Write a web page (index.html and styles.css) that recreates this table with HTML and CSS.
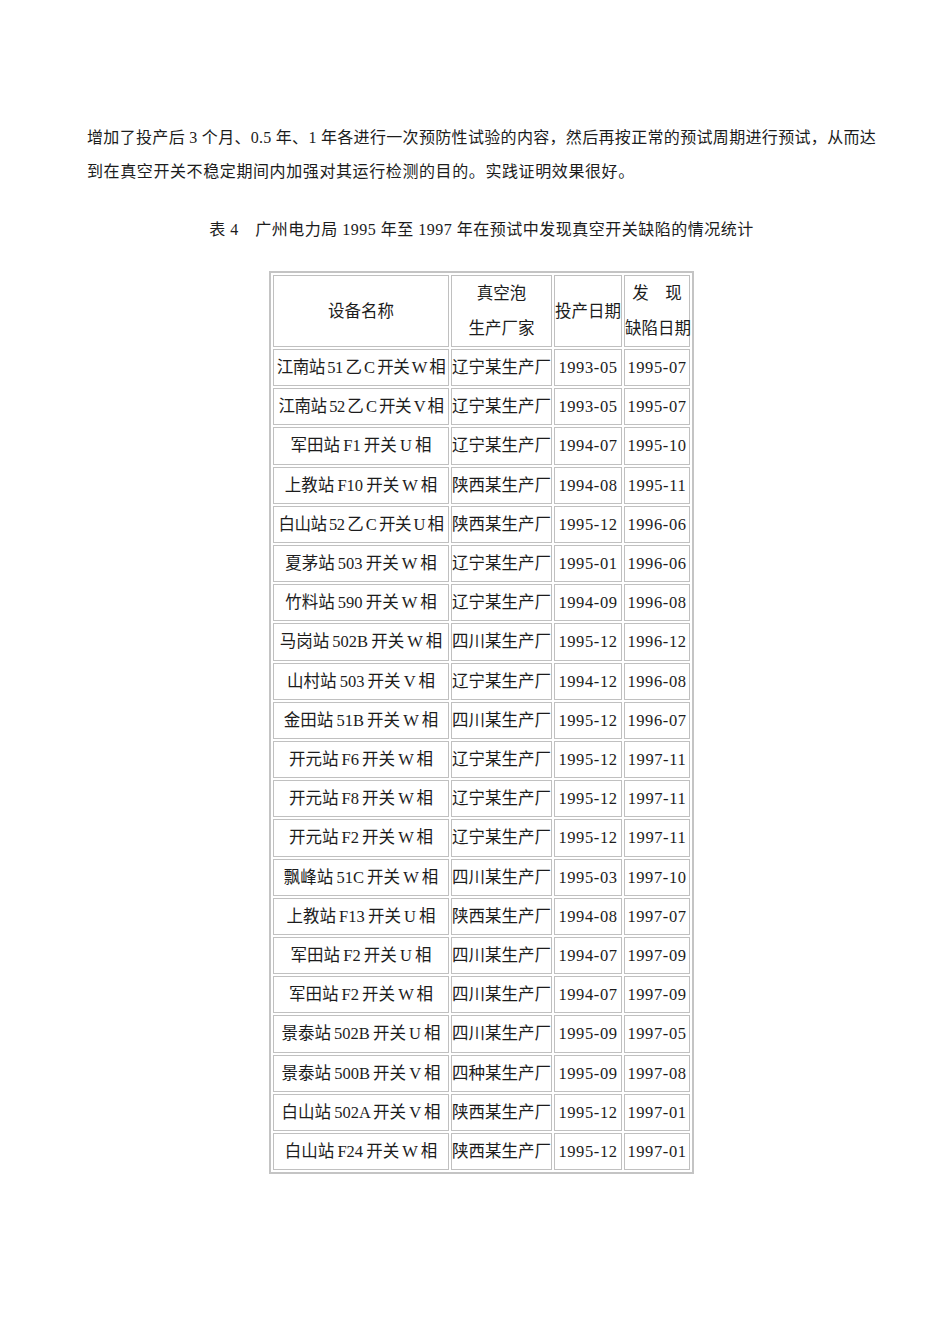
FILE: index.html
```html
<!DOCTYPE html>
<html lang="zh-CN">
<head>
<meta charset="utf-8">
<title>真空开关缺陷统计</title>
<link rel="stylesheet" href="styles.css">
</head>
<body>
<div class="page">
  <p class="para">
    <span class="line1">增加了投产后 3 个月、0.5 年、1 年各进行一次预防性试验的内容，然后再按正常的预试周期进行预试，从而达</span>
    <span class="line2">到在真空开关不稳定期间内加强对其运行检测的目的。实践证明效果很好。</span>
  </p>
  <p class="caption">表 4　广州电力局 1995 年至 1997 年在预试中发现真空开关缺陷的情况统计</p>
  <table class="stats">
    <colgroup>
      <col class="c1"><col class="c2"><col class="c3"><col class="c4">
    </colgroup>
    <thead>
      <tr>
        <th>设备名称</th>
        <th>真空泡<br>生产厂家</th>
        <th>投产日期</th>
        <th>发　现<br>缺陷日期</th>
      </tr>
    </thead>
    <tbody>
      <tr><td class="name tight">江南站 51 乙 C 开关 W 相</td><td>辽宁某生产厂</td><td class="date">1993-05</td><td class="date">1995-07</td></tr>
      <tr><td class="name tight">江南站 52 乙 C 开关 V 相</td><td>辽宁某生产厂</td><td class="date">1993-05</td><td class="date">1995-07</td></tr>
      <tr><td class="name">军田站 F1 开关 U 相</td><td>辽宁某生产厂</td><td class="date">1994-07</td><td class="date">1995-10</td></tr>
      <tr><td class="name">上教站 F10 开关 W 相</td><td>陕西某生产厂</td><td class="date">1994-08</td><td class="date">1995-11</td></tr>
      <tr><td class="name tight">白山站 52 乙 C 开关 U 相</td><td>陕西某生产厂</td><td class="date">1995-12</td><td class="date">1996-06</td></tr>
      <tr><td class="name">夏茅站 503 开关 W 相</td><td>辽宁某生产厂</td><td class="date">1995-01</td><td class="date">1996-06</td></tr>
      <tr><td class="name">竹料站 590 开关 W 相</td><td>辽宁某生产厂</td><td class="date">1994-09</td><td class="date">1996-08</td></tr>
      <tr><td class="name">马岗站 502B 开关 W 相</td><td>四川某生产厂</td><td class="date">1995-12</td><td class="date">1996-12</td></tr>
      <tr><td class="name">山村站 503 开关 V 相</td><td>辽宁某生产厂</td><td class="date">1994-12</td><td class="date">1996-08</td></tr>
      <tr><td class="name">金田站 51B 开关 W 相</td><td>四川某生产厂</td><td class="date">1995-12</td><td class="date">1996-07</td></tr>
      <tr><td class="name">开元站 F6 开关 W 相</td><td>辽宁某生产厂</td><td class="date">1995-12</td><td class="date">1997-11</td></tr>
      <tr><td class="name">开元站 F8 开关 W 相</td><td>辽宁某生产厂</td><td class="date">1995-12</td><td class="date">1997-11</td></tr>
      <tr><td class="name">开元站 F2 开关 W 相</td><td>辽宁某生产厂</td><td class="date">1995-12</td><td class="date">1997-11</td></tr>
      <tr><td class="name">飘峰站 51C 开关 W 相</td><td>四川某生产厂</td><td class="date">1995-03</td><td class="date">1997-10</td></tr>
      <tr><td class="name">上教站 F13 开关 U 相</td><td>陕西某生产厂</td><td class="date">1994-08</td><td class="date">1997-07</td></tr>
      <tr><td class="name">军田站 F2 开关 U 相</td><td>四川某生产厂</td><td class="date">1994-07</td><td class="date">1997-09</td></tr>
      <tr><td class="name">军田站 F2 开关 W 相</td><td>四川某生产厂</td><td class="date">1994-07</td><td class="date">1997-09</td></tr>
      <tr><td class="name">景泰站 502B 开关 U 相</td><td>四川某生产厂</td><td class="date">1995-09</td><td class="date">1997-05</td></tr>
      <tr><td class="name">景泰站 500B 开关 V 相</td><td>四种某生产厂</td><td class="date">1995-09</td><td class="date">1997-08</td></tr>
      <tr><td class="name">白山站 502A 开关 V 相</td><td>陕西某生产厂</td><td class="date">1995-12</td><td class="date">1997-01</td></tr>
      <tr><td class="name">白山站 F24 开关 W 相</td><td>陕西某生产厂</td><td class="date">1995-12</td><td class="date">1997-01</td></tr>
    </tbody>
  </table>
</div>
</body>
</html>
```

FILE: styles.css
```css
html, body {
  margin: 0;
  padding: 0;
  background: #ffffff;
}

body {
  font-family: "Liberation Serif", "Noto Sans CJK SC", serif;
  color: #1c1c1c;
}

.page {
  width: 789px;
  padding: 121px 0 0 87px;
}

.para {
  margin: 0;
  font-size: 16px;
  line-height: 34px;
}

.line1 {
  display: block;
  text-align: justify;
  text-align-last: justify;
  letter-spacing: 0.2px;
}

.line2 {
  display: block;
  letter-spacing: 0.6px;
}

.caption {
  margin: 24px 0 0 0;
  font-size: 16px;
  line-height: 34px;
  letter-spacing: 0.5px;
  text-align: center;
}

.stats {
  margin: 24px auto 0 auto;
  width: 425px;
  table-layout: fixed;
  border-collapse: separate;
  border-spacing: 2px;
  border: 2px solid #c4c4c4;
  font-size: 16.5px;
}

.c1 { width: 176px; }
.c2 { width: 101px; }
.c3 { width: 68px; }
.c4 { width: 66px; }

.stats th,
.stats td {
  border: 1px solid #c0c0c0;
  padding: 0;
  text-align: center;
  vertical-align: middle;
  white-space: nowrap;
  overflow: visible;
  font-weight: normal;
}

.stats th {
  line-height: 35px;
}

.stats td {
  line-height: 35.2px;
}

.stats td.name {
  word-spacing: -1px;
}

.stats td.tight {
  letter-spacing: -0.5px;
  word-spacing: -1px;
}

.stats td.date {
  letter-spacing: 0.6px;
}
```
